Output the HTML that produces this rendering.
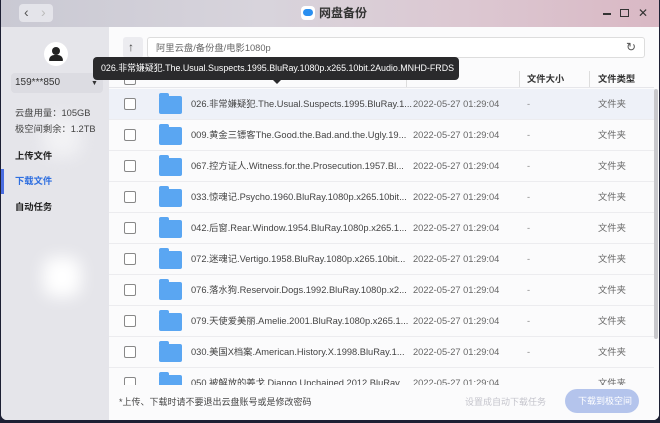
<!DOCTYPE html><html><head><style>
*{margin:0;padding:0;box-sizing:border-box}
body{width:660px;height:423px;overflow:hidden;background:#1c1f33;font-family:"Liberation Sans","Noto Sans CJK SC",sans-serif;position:relative}
.win{position:absolute;left:1px;top:0;width:658px;height:420px;border-radius:0 0 6px 6px;overflow:hidden;background:#fafafb}
.title{position:absolute;left:0;top:0;width:658px;height:27px;background:linear-gradient(90deg,#c9c9d3 0%,#d8d4dc 40%,#dcc8d2 70%,#d9b8c4 100%)}
.side{position:absolute;left:0;top:27px;width:108px;height:393px;background:#e5e5ea}
.blob{position:absolute;background:#fff;filter:blur(8px);border-radius:12px}
.main{position:absolute;left:108px;top:27px;width:550px;height:393px;background:#fbfbfc}
.t{position:absolute;white-space:nowrap;font-size:9.3px;line-height:12px;color:#444}
.row{position:absolute;left:0;width:545px;height:31px;border-bottom:1px solid #ececef}
.cb{position:absolute;left:15px;top:9px;width:12px;height:12px;border:1.3px solid #888;border-radius:2px;background:#fff}
.fd{position:absolute;left:50px;top:7px;width:23px;height:18px;background:#5aa6f2;border-radius:2px}
.fd:before{content:"";position:absolute;left:0;top:-3px;width:10px;height:4px;background:#5aa6f2;border-radius:2px 2px 0 0}
.row .n{left:82px;top:9px}.row .d{left:304px;top:9px;color:#666}.row .s{left:418px;top:9px;color:#888}.row .k{left:489px;top:9px;color:#666}
</style></head><body>
<div class="win">
<div class="title">
 <div style="position:absolute;left:18px;top:4px;width:34px;height:18px;background:#e4e4ea;border-radius:4px"></div>
 <div class="t" style="left:23px;top:3px;font-size:14px;line-height:18px;color:#555">&#8249;</div>
 <div class="t" style="left:40px;top:3px;font-size:14px;line-height:18px;color:#bbb">&#8250;</div>
 <div style="position:absolute;left:300px;top:6px;width:14px;height:14px;border-radius:4px;background:#fff"><div style="position:absolute;left:2px;top:3px;width:10px;height:7px;background:#2a8ff0;border-radius:5px"></div></div>
 <div class="t" style="left:318px;top:6px;font-size:12px;line-height:15px;font-weight:bold;color:#333">网盘备份</div>
 <div style="position:absolute;left:602px;top:13px;width:8px;height:2px;background:#333"></div>
 <div style="position:absolute;left:619px;top:9px;width:9px;height:8px;border:1.5px solid #333"></div>
 <div class="t" style="left:637px;top:6px;font-size:12px;line-height:15px;color:#333">✕</div>
</div>
<div class="side">
 <div class="blob" style="left:42px;top:230px;width:38px;height:40px"></div>
 <div class="blob" style="left:42px;top:90px;width:38px;height:40px;opacity:.5"></div>
 <div style="position:absolute;left:43px;top:15px;width:24px;height:24px;border-radius:50%;background:#fff"><div style="position:absolute;left:8px;top:5px;width:8px;height:8px;border-radius:50%;background:#222"></div><div style="position:absolute;left:5px;top:13px;width:14px;height:6px;border-radius:6px 6px 1px 1px;background:#222"></div></div>
 <div style="position:absolute;left:10px;top:46px;width:92px;height:20px;background:#dcdce2;border-radius:4px"></div>
 <div class="t" style="left:14px;top:50px;color:#333;font-size:10px">159***850</div>
 <div class="t" style="left:90px;top:51px;font-size:7px;color:#333">▼</div>
 <div class="t" style="left:14px;top:80px;color:#444">云盘用量：105GB</div>
 <div class="t" style="left:14px;top:96px;color:#444">极空间剩余：1.2TB</div>
 <div class="t" style="left:14px;top:123px;font-weight:bold;color:#222">上传文件</div>
 <div style="position:absolute;left:0;top:142px;width:3px;height:25px;background:#4a6de0"></div>
 <div class="t" style="left:14px;top:148px;font-weight:bold;color:#2f6fe0">下载文件</div>
 <div class="t" style="left:14px;top:174px;font-weight:bold;color:#222">自动任务</div>
</div>
<div class="main">
 <div style="position:absolute;left:14px;top:10px;width:20px;height:21px;background:#ececf0;border-radius:3px"></div>
 <div class="t" style="left:19px;top:14px;font-size:12px;color:#444">↑</div>
 <div style="position:absolute;left:38px;top:10px;width:498px;height:21px;border:1px solid #ddd;border-radius:3px;background:#fff"></div>
 <div class="t" style="left:47px;top:15px;color:#666">阿里云盘/备份盘/电影1080p</div>
 <div class="t" style="left:517px;top:14px;font-size:12px;color:#555">↻</div>
 <div style="position:absolute;left:0;top:42px;width:545px;height:19px;border-bottom:1px solid #e6e6ea"></div>
 <div style="position:absolute;left:15px;top:46px;width:12px;height:12px;border:1.3px solid #888;border-radius:2px"></div>
 <div style="position:absolute;left:297px;top:44px;width:1px;height:16px;background:#ddd"></div>
 <div style="position:absolute;left:410px;top:44px;width:1px;height:16px;background:#ddd"></div>
 <div style="position:absolute;left:480px;top:44px;width:1px;height:16px;background:#ddd"></div>
 <div class="t" style="left:418px;top:46px;font-weight:bold;color:#333">文件大小</div>
 <div class="t" style="left:489px;top:46px;font-weight:bold;color:#333">文件类型</div>
 <div style="position:absolute;left:545px;top:62px;width:4px;height:250px;background:#c8c8cc;border-radius:2px"></div>
 <div class="row" style="top:62px;background:#eef1f8"><div class="cb"></div><div class="fd"></div><div class="t n">026.非常嫌疑犯.The.Usual.Suspects.1995.BluRay.1...</div><div class="t d">2022-05-27 01:29:04</div><div class="t s">-</div><div class="t k">文件夹</div></div>
 <div class="row" style="top:93px"><div class="cb"></div><div class="fd"></div><div class="t n">009.黄金三镖客The.Good.the.Bad.and.the.Ugly.19...</div><div class="t d">2022-05-27 01:29:04</div><div class="t s">-</div><div class="t k">文件夹</div></div>
 <div class="row" style="top:124px"><div class="cb"></div><div class="fd"></div><div class="t n">067.控方证人.Witness.for.the.Prosecution.1957.Bl...</div><div class="t d">2022-05-27 01:29:04</div><div class="t s">-</div><div class="t k">文件夹</div></div>
 <div class="row" style="top:155px"><div class="cb"></div><div class="fd"></div><div class="t n">033.惊魂记.Psycho.1960.BluRay.1080p.x265.10bit...</div><div class="t d">2022-05-27 01:29:04</div><div class="t s">-</div><div class="t k">文件夹</div></div>
 <div class="row" style="top:186px"><div class="cb"></div><div class="fd"></div><div class="t n">042.后窗.Rear.Window.1954.BluRay.1080p.x265.1...</div><div class="t d">2022-05-27 01:29:04</div><div class="t s">-</div><div class="t k">文件夹</div></div>
 <div class="row" style="top:217px"><div class="cb"></div><div class="fd"></div><div class="t n">072.迷魂记.Vertigo.1958.BluRay.1080p.x265.10bit...</div><div class="t d">2022-05-27 01:29:04</div><div class="t s">-</div><div class="t k">文件夹</div></div>
 <div class="row" style="top:248px"><div class="cb"></div><div class="fd"></div><div class="t n">076.落水狗.Reservoir.Dogs.1992.BluRay.1080p.x2...</div><div class="t d">2022-05-27 01:29:04</div><div class="t s">-</div><div class="t k">文件夹</div></div>
 <div class="row" style="top:279px"><div class="cb"></div><div class="fd"></div><div class="t n">079.天使爱美丽.Amelie.2001.BluRay.1080p.x265.1...</div><div class="t d">2022-05-27 01:29:04</div><div class="t s">-</div><div class="t k">文件夹</div></div>
 <div class="row" style="top:310px"><div class="cb"></div><div class="fd"></div><div class="t n">030.美国X档案.American.History.X.1998.BluRay.1...</div><div class="t d">2022-05-27 01:29:04</div><div class="t s">-</div><div class="t k">文件夹</div></div>
 <div class="row" style="top:341px;height:17px;overflow:hidden;border:none"><div class="cb"></div><div class="fd"></div><div class="t n">050.被解放的姜戈.Django.Unchained.2012.BluRay...</div><div class="t d">2022-05-27 01:29:04</div><div class="t k">文件夹</div></div>
 <div style="position:absolute;left:0;top:358px;width:550px;height:35px;background:#fbfbfc"></div>
 <div class="t" style="left:10px;top:369px;font-size:9px;color:#444">*上传、下载时请不要退出云盘账号或是修改密码</div>
 <div class="t" style="left:356px;top:369px;font-size:9px;color:#c4c4cc">设置成自动下载任务</div>
 <div style="position:absolute;left:456px;top:362px;width:74px;height:24px;border-radius:12px;background:#b4c4ec"></div>
 <div class="t" style="left:469px;top:368px;font-size:9px;color:#fff">下载到极空间</div>
</div>
<div style="position:absolute;left:92px;top:57px;width:366px;height:23px;background:#2a2a2c;border-radius:4px"></div>
<div style="position:absolute;left:271px;top:79px;width:0;height:0;border-left:5px solid transparent;border-right:5px solid transparent;border-top:5px solid #2a2a2c"></div>
<div class="t" style="left:100px;top:62px;color:#fff;font-size:8.9px">026.非常嫌疑犯.The.Usual.Suspects.1995.BluRay.1080p.x265.10bit.2Audio.MNHD-FRDS</div>
</div>
</body></html>
